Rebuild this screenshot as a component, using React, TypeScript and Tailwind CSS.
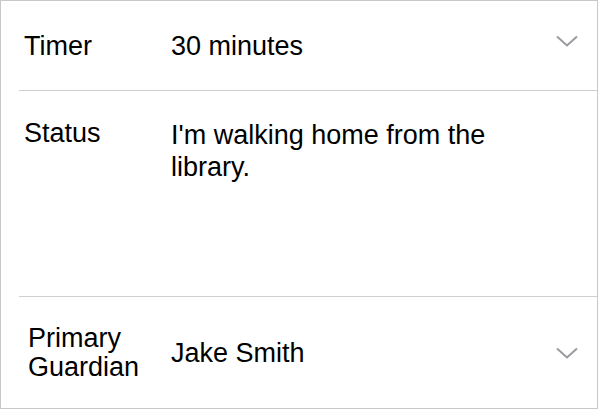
import React from "react"

const font = { fontFamily: '"Liberation Sans", Arial, Helvetica, sans-serif' }

function Chevron({ className = "" }: { className?: string }) {
  return (
    <svg width="22" height="12" viewBox="0 0 22 12" className={"shrink-0 " + className}>
      <path d="M1 1.5 L11 10.5 L21 1.5" fill="none" stroke="#9a9a9f" strokeWidth="2" />
    </svg>
  )
}

export default function App() {
  return (
    <div className="w-[600px] h-[410px] bg-white" style={font}>
      <div className="w-[598px] h-[409px] border border-[#c8c8c8] flex flex-col text-[27px] text-black">
        <div className="h-[89px] flex items-center pl-[23px] pr-[19px]">
          <div className="w-[147px] leading-[32px] pt-[1px]">Timer</div>
          <div className="flex-1 leading-[32px] pt-[1px]">30 minutes</div>
          <Chevron className="mb-[10px]" />
        </div>
        <div className="ml-[18px] border-t border-[#cfcfcf]" />
        <div className="h-[205px] flex items-start pl-[23px] pr-[19px] pt-[26px]">
          <div className="w-[147px] leading-[32px]">Status</div>
          <div className="flex-1 leading-[32px] pt-[2px]">
            I'm walking home from the
            <br />
            library.
          </div>
        </div>
        <div className="ml-[18px] border-t border-[#cfcfcf]" />
        <div className="flex-1 flex items-center pl-[23px] pr-[19px]">
          <div className="w-[147px] leading-[29px] pl-[4px]">
            Primary
            <br />
            Guardian
          </div>
          <div className="flex-1 leading-[32px]">Jake Smith</div>
          <Chevron />
        </div>
      </div>
    </div>
  )
}
